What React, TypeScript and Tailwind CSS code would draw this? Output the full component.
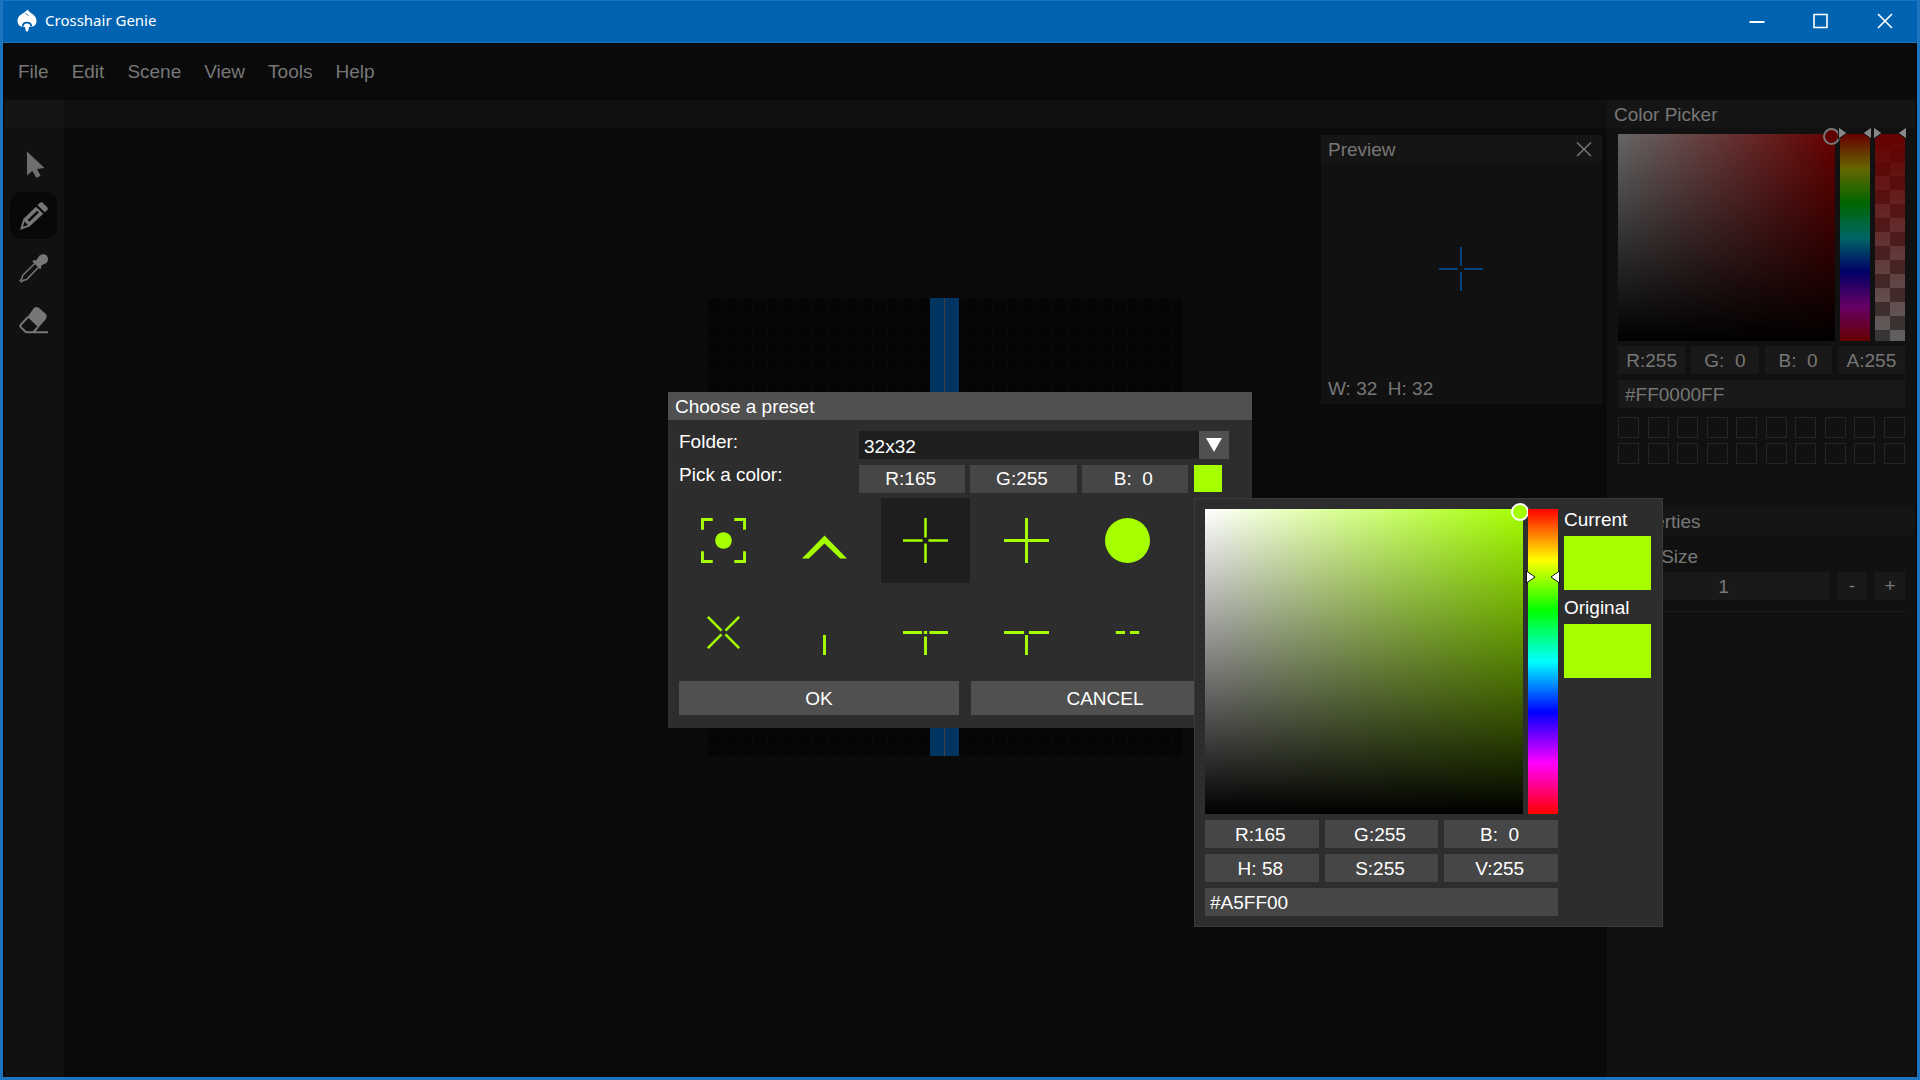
import type { ReactNode } from "react";

const LIME = "#a5ff00";

function Logo() {
  return (
    <svg className="h-6 w-5" viewBox="0 0 20 24" fill="white" aria-hidden="true">
      <path d="M10.5 .5 C9.5 3.6 .5 5 .5 11.8 C.5 15.6 2.6 17.6 5.4 17.6 L8 18 L8.6 21 Q10 24.5 11.4 21 L12 18 L14.6 17.6 C17.4 17.6 19.5 15.6 19.5 11.8 C19.5 5.5 12.5 4.4 10.5 .5Z" />
      <path d="M5.8 17.2 C6 12.4 14 12.4 14.2 17.2" fill="none" stroke="#0063b1" strokeWidth="1.8" />
      <path d="M8.5 4.5 L11.5 6.5" stroke="#0063b1" strokeWidth=".8" />
    </svg>
  );
}

const svgProps = { viewBox: "0 0 30 30", className: "size-[30px]", "aria-hidden": true } as const;

function PointerIcon() {
  return (
    <svg {...svgProps}>
      <path d="M8 2.5 L8 26.5 L13.3 22 L17 28.3 Q19 28.8 21.5 26.5 L18 20 L25.5 19 Z" fill="#6e6e6e" />
    </svg>
  );
}
function PencilIcon() {
  return (
    <svg {...svgProps}>
      <path d="M21 1.5 Q22.5 .6 24 2 L28.5 6.5 Q29.4 8 28.3 9 L25.8 11.3 L18.5 4.2 Z" fill="#777" />
      <path d="M17 5.7 L24.3 12.8 L10.5 25.5 L1 29 L4.3 18 Z" fill="#777" />
      <path d="M19 10.6 L9.5 19.8" stroke="#050505" strokeWidth="2.4" fill="none" />
      <path d="M5.6 20.6 L4 25.8 L8.8 24 Z" fill="#050505" />
    </svg>
  );
}
function DropperIcon() {
  return (
    <svg {...svgProps}>
      <path d="M19.5 4 C21.5 0 28.5 .2 29 5.5 C29.3 8.5 27.5 10.5 25 11 L22 13 L22.3 15.2 L20.8 16 L13.5 8.8 L14.5 7 L17 7.6 Z" fill="#777" />
      <path d="M15.5 10.8 L3.5 22.5 L3 25.6 L1.2 27.6 L2.5 28.8 L4.6 27.2 L7.6 26.6 L19.2 14.6" fill="none" stroke="#777" strokeWidth="1.5" />
    </svg>
  );
}
function EraserIcon() {
  return (
    <svg {...svgProps}>
      <path d="M14.5 3.5 Q17.5 .8 20 3 L27 9 Q28.5 11.5 26.5 14.5 L19.5 22.5 L8.5 12 Z" fill="#777" />
      <path d="M9 12 L1.5 20 Q.8 21.2 2 22.4 L7 27.3 L29 27.3 M19 22 L14.5 27" fill="none" stroke="#777" strokeWidth="2" />
    </svg>
  );
}

function Arrows({ dim }: { dim?: boolean }) {
  return (
    <>
      <svg className="pointer-events-none absolute -left-[2px] h-[14px] w-[10px]" viewBox="0 0 10 14" aria-hidden="true">
        <path d="M.5 1 L9 7 L.5 13 Z" fill={dim ? "#888" : "#fff"} stroke="#111" />
      </svg>
      <svg className="pointer-events-none absolute -right-[2px] h-[14px] w-[10px]" viewBox="0 0 10 14" aria-hidden="true">
        <path d="M9.5 1 L1 7 L9.5 13 Z" fill={dim ? "#888" : "#fff"} stroke="#111" />
      </svg>
    </>
  );
}

function Slider({ label, value, max }: { label: string; value: number; max: number }) {
  return (
    <input
      type="range"
      aria-label={label}
      min={0}
      max={max}
      defaultValue={value}
      className="absolute inset-0 h-full w-full opacity-0"
    />
  );
}

function DimField({ label, value }: { label: string; value: string }) {
  return (
    <input
      aria-label={label}
      defaultValue={value}
      className="h-[28px] w-full min-w-0 bg-[#191919] pt-[2px] text-center text-[#777]"
    />
  );
}
function Field({ label, value }: { label: string; value: string }) {
  return (
    <input
      aria-label={label}
      defaultValue={value}
      className="h-[28px] w-full min-w-0 bg-[#464646] pt-[2px] pr-[3px] text-center text-white"
    />
  );
}

const tools: { name: string; icon: ReactNode; active?: boolean }[] = [
  { name: "Select", icon: <PointerIcon /> },
  { name: "Pencil", icon: <PencilIcon />, active: true },
  { name: "Color dropper", icon: <DropperIcon /> },
  { name: "Eraser", icon: <EraserIcon /> },
];

const presets: { name: string; selected?: boolean; art: ReactNode }[] = [
  {
    name: "Dot with corners",
    art: (
      <>
        <path d="M1.5 12V1.5H12M34 1.5H44.5V12M44.5 34V44.5H34M12 44.5H1.5V34" fill="none" strokeWidth="3" />
        <circle cx="23" cy="23" r="8.5" fill={LIME} stroke="none" />
      </>
    ),
  },
  { name: "Chevron", art: <path d="M0 41.5 L23 18 L46 41.5 H39 L23 26 L7 41.5Z" fill={LIME} stroke="none" /> },
  { name: "Cross with gap", selected: true, art: <path d="M23 0V20M23 26V46M0 23H20M26 23H46" strokeWidth="2.6" /> },
  { name: "Cross", art: <path d="M23 0V46M0 23H46" strokeWidth="3" /> },
  { name: "Disc", art: <circle cx="23" cy="23" r="23" fill={LIME} stroke="none" /> },
  { name: "Diagonal cross", art: <path d="M7 7L21 21M25 25L39 39M39 7L25 21M21 25L7 39" strokeWidth="2.6" /> },
  { name: "Lower line", art: <path d="M23 25.5V46" strokeWidth="3" /> },
  { name: "T with dot", art: <path d="M0 23H19.5M21.3 23H24.7M27 23H46M23 27V46" strokeWidth="3" /> },
  { name: "T with gap", art: <path d="M0 23H20.5M25.5 23H46M23 25.5V46" strokeWidth="3" /> },
  { name: "Dashes", art: <path d="M11 23H20.5M25.5 23H35" strokeWidth="3" /> },
];

function TitleBar() {
  return (
    <header className="flex h-[43px] shrink-0 items-center border-y border-[#1c74bf] bg-[#0063b1] pb-[2px] pl-[14px] text-white">
      <Logo />
      <h1 className="ml-[8px] flex-1 font-['Noto_Sans','Open_Sans',sans-serif] text-[15px]">Crosshair Genie</h1>
      <div className="flex h-full">
        <button aria-label="Minimize" className="grid w-16 place-items-center">
          <svg className="size-4" viewBox="0 0 16 16" stroke="white" strokeWidth="2" aria-hidden="true"><path d="M.5 9H15.5" /></svg>
        </button>
        <button aria-label="Maximize" className="grid w-16 place-items-center">
          <svg className="size-4" viewBox="0 0 16 16" fill="none" stroke="white" strokeWidth="1.6" aria-hidden="true"><path d="M1 1.5H14V14.5H1Z" /></svg>
        </button>
        <button aria-label="Close" className="grid w-16 place-items-center">
          <svg className="size-4" viewBox="0 0 16 16" stroke="white" strokeWidth="1.6" aria-hidden="true"><path d="M1 1L15 15M15 1L1 15" /></svg>
        </button>
      </div>
    </header>
  );
}

function Preview() {
  return (
    <section aria-label="Preview" className="absolute top-[7px] right-[5px] flex h-[269px] w-[281px] flex-col bg-[#111]">
      <div className="flex h-[28px] items-center justify-between bg-[#151515] pt-[2px] pr-[10px] pl-[7px]">
        <h2>Preview</h2>
        <button aria-label="Close preview">
          <svg className="size-4" viewBox="0 0 16 16" stroke="#777" strokeWidth="1.5" aria-hidden="true"><path d="M1 .5L15 14M15 .5L1 14" /></svg>
        </button>
      </div>
      <div className="grid flex-1 place-items-center pr-px">
        <svg className="size-11" viewBox="0 0 44 44" stroke="#00427c" strokeWidth="2" aria-hidden="true">
          <path d="M22 0V19M22 25V44M0 22H19M25 22H44" />
        </svg>
      </div>
      <p className="h-[29px] pl-[7px] whitespace-pre">W: 32  H: 32</p>
    </section>
  );
}

function SidePanel() {
  return (
    <aside className="flex w-[308px] shrink-0 flex-col bg-[#111]">
      <h2 className="flex h-[28px] items-center bg-[#151515] pt-[2px] pl-[7px]">Color Picker</h2>
      <div className="mt-[6px] mr-[10px] ml-[11px] flex h-[207px] gap-[5px]">
        <div className="relative flex-1 bg-[linear-gradient(to_top,black,transparent),linear-gradient(to_right,#666,#660000)]">
          <span className="absolute -top-[6px] -right-[5px] size-[17px] rounded-full border-2 border-[#777] bg-[#600000]" />
        </div>
        <div className="relative w-[30px] bg-[linear-gradient(#660000,#666600,#006600,#006666,#000066,#660066,#660000)]">
          <span className="absolute -top-[8px] h-0 w-full"><Arrows dim /></span>
          <Slider label="Hue" value={0} max={360} />
        </div>
        <div className="relative w-[30px] bg-[linear-gradient(#660000,#66000000),repeating-conic-gradient(#606060_0_25%,#363636_0_50%)] bg-size-[100%_100%,30px_28px]">
          <span className="absolute -top-[8px] h-0 w-full"><Arrows dim /></span>
          <Slider label="Alpha" value={255} max={255} />
        </div>
      </div>
      <div className="mt-[5px] mr-[10px] ml-[11px] grid grid-cols-4 gap-[6px]">
        <DimField label="Red" value="R:255" />
        <DimField label="Green" value="G:  0" />
        <DimField label="Blue" value="B:  0" />
        <DimField label="Alpha value" value="A:255" />
      </div>
      <input
        aria-label="Hex color"
        defaultValue="#FF0000FF"
        className="mt-[6px] mr-[10px] ml-[11px] h-[28px] bg-[#191919] pt-[2px] pl-[7px]"
      />
      <div className="mt-[9px] mr-[10px] ml-[11px] flex flex-wrap justify-between gap-y-[5px]">
        {Array.from({ length: 20 }, (_, i) => (
          <button key={i} aria-label={`Saved color ${i + 1}`} className="mr-[8px] h-[21px] w-[21px] border border-[#252525] [&:nth-child(10n)]:mr-0" />
        ))}
      </div>
      <h2 className="mt-[43px] flex h-[28px] items-center bg-[#151515] pt-[2px] pl-[7px]">Properties</h2>
      <label htmlFor="tool-size" className="mt-[10px] ml-[14px] h-[27px] leading-[24px]">Tool Size</label>
      <div className="mr-[10px] ml-[11px] flex gap-[8px]">
        <input id="tool-size" defaultValue="1" className="h-[28px] min-w-0 flex-1 bg-[#191919] pt-[2px] text-center" />
        <button className="h-[28px] w-[30px] bg-[#191919]">-</button>
        <button className="h-[28px] w-[30px] bg-[#191919]">+</button>
      </div>
      <hr className="mt-[11px] mr-[10px] ml-[11px] border-[#1b1b1b]" />
    </aside>
  );
}

function ColorPopup() {
  return (
    <div
      role="dialog"
      aria-label="Color"
      className="absolute top-[106px] left-[526px] flex w-[469px] flex-col border border-[#3a3a3a] bg-[#2d2d2d] p-[10px]"
    >
      <div className="flex gap-[6px]">
        <div className="flex w-[353px] flex-col gap-[6px]">
          <div className="flex h-[305px] gap-[5px]">
            <div className="relative flex-1 bg-[linear-gradient(to_top,black,transparent),linear-gradient(to_right,white,#a5ff00)]">
              <span className="absolute -top-[6px] -right-[6px] size-[18px] rounded-full border-2 border-white bg-[#a5ff00]" />
            </div>
            <div className="relative w-[30px] bg-[linear-gradient(#f00,#ff0,#0f0,#0ff,#00f,#f0f,#f00)]">
              <span className="absolute top-[61px] h-0 w-full"><Arrows /></span>
              <Slider label="Preset hue" value={58} max={255} />
            </div>
          </div>
          <div className="grid grid-cols-3 gap-[6px]">
            <Field label="Popup red" value="R:165" />
            <Field label="Popup green" value="G:255" />
            <Field label="Popup blue" value="B:  0" />
            <Field label="Hue value" value="H: 58" />
            <Field label="Saturation value" value="S:255" />
            <Field label="Brightness value" value="V:255" />
          </div>
          <input aria-label="Popup hex color" defaultValue="#A5FF00" className="h-[28px] bg-[#464646] pt-[2px] pl-[5px]" />
        </div>
        <div className="w-[87px] leading-[22px]">
          <p className="mb-[5px]">Current</p>
          <div className="h-[54px] bg-[#a5ff00]" />
          <p className="mt-[7px] mb-[5px]">Original</p>
          <div className="h-[54px] bg-[#a5ff00]" />
        </div>
      </div>
    </div>
  );
}

function PresetDialog() {
  return (
    <div
      role="dialog"
      aria-labelledby="preset-title"
      className="absolute top-1/2 left-1/2 w-[584px] -translate-x-1/2 -translate-y-1/2 bg-[#2d2d2d] text-white"
    >
      <h2 id="preset-title" className="flex h-[28px] items-center bg-[#505050] pt-[2px] pl-[7px]">Choose a preset</h2>
      <div className="grid grid-cols-[180px_370px] grid-rows-[28px_29px] gap-y-[5px] pt-[11px] pl-[11px]">
        <label htmlFor="folder" className="leading-[22px]">Folder:</label>
        <div className="relative flex">
          <select id="folder" className="h-[28px] w-full appearance-none bg-[#1e1e1e] pt-[2px] pl-[5px]">
            <option>32x32</option>
          </select>
          <span className="pointer-events-none absolute top-0 right-0 grid h-[28px] w-[30px] place-items-center bg-[#505050]">
            <svg className="h-[14px] w-4" viewBox="0 0 16 14" fill="white" aria-hidden="true"><path d="M0 0H16L8 14Z" /></svg>
          </span>
        </div>
        <span className="leading-[22px]">Pick a color:</span>
        <div className="flex items-center gap-[5px]">
          <Field label="Red value" value="R:165" />
          <Field label="Green value" value="G:255" />
          <Field label="Blue value" value="B:  0" />
          <button aria-label="Open color popup" className="mr-[7px] ml-[1px] h-[27px] w-[28px] shrink-0 bg-[#a5ff00]" />
        </div>
      </div>
      <div className="grid grid-cols-[repeat(5,89px)] gap-x-[12px] gap-y-[7px] pt-[5px] pl-[11px]">
        {presets.map((p) => (
          <button
            key={p.name}
            aria-label={p.name}
            className={p.selected ? "grid h-[85px] place-items-center bg-[#1e1e1e]" : "grid h-[85px] place-items-center"}
          >
            <svg className="size-[45px]" viewBox="0 0 46 46" stroke={LIME} fill="none" aria-hidden="true">
              {p.art}
            </svg>
          </button>
        ))}
      </div>
      <div className="flex gap-[12px] px-[11px] pt-[6px] pb-[13px]">
        <button className="h-[34px] w-[280px] bg-[#505050] pt-[2px]">OK</button>
        <button className="mr-[2px] h-[34px] flex-1 bg-[#505050] pt-[2px]">CANCEL</button>
      </div>
      <ColorPopup />
    </div>
  );
}

export default function App() {
  return (
    <div className="flex h-screen flex-col border-x-[3px] border-b-[3px] border-[#1c74bf] bg-[#0a0a0a] font-['Liberation_Sans',Arial,sans-serif] text-[19px] text-[#777]">
      <TitleBar />
      <div className="relative flex min-h-0 flex-1 flex-col">
        <nav className="flex h-[57px] shrink-0 items-center gap-[23px] pt-[2px] pl-[15px]">
          {["File", "Edit", "Scene", "View", "Tools", "Help"].map((m) => (
            <button key={m}>{m}</button>
          ))}
        </nav>
        <div className="flex min-h-0 flex-1 px-[2px]">
          <div className="w-[59px] shrink-0 bg-[#111]">
            <div className="h-[28px] bg-[#151515]" />
            <div className="flex flex-col items-start gap-[5px] pt-[12px] pl-[5px]">
              {tools.map((t) => (
                <button
                  key={t.name}
                  aria-label={t.name}
                  className={
                    t.active
                      ? "grid size-[47px] place-items-center rounded-xl bg-[#080808]"
                      : "grid size-[47px] place-items-center rounded-xl"
                  }
                >
                  {t.icon}
                </button>
              ))}
            </div>
          </div>
          <main className="flex min-w-0 flex-1 flex-col">
            <div className="h-[28px] bg-[#101010]" />
            <div className="relative flex-1">
              <div className="absolute top-[170px] left-[643px] flex h-[458px] w-[475px] justify-center bg-[#050505] bg-[linear-gradient(#090909_1px,transparent_1px),linear-gradient(to_right,#090909_1px,transparent_1px)] bg-size-[15px_14px]">
                <div className="flex w-[29px] justify-center bg-[#003461]">
                  <div className="w-px bg-[#3f4347]" />
                </div>
              </div>
              <Preview />
            </div>
          </main>
          <SidePanel />
        </div>
        <PresetDialog />
      </div>
    </div>
  );
}
